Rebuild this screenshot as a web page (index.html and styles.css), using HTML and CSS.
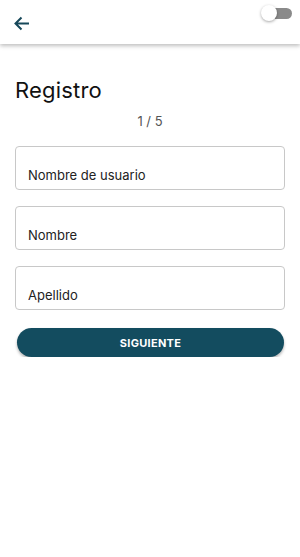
FILE: index.html
```html
<!DOCTYPE html>
<html lang="es">
  <head>
    <meta charset="utf-8" />
    <title>Registro</title>
    <link rel="stylesheet" href="styles.css">
  </head>
  <body>
    <div id="wrap">
      <div id="header">
        <button class="back">
          <svg width="17" height="15" viewBox="0 0 17 15">
            <path d="M16 7.5H2.5M8.5 1.5L2.5 7.5l6 6" fill="none" stroke="#17485a" stroke-width="2" />
          </svg>
        </button>
        <div class="toggle"><span class="thumb"></span></div>
      </div>
      <div id="main">
        <h1 class="title">Registro</h1>
        <p class="step">1 / 5</p>
        <form>
          <label class="field"><input type="text" placeholder="Nombre de usuario" /></label>
          <label class="field"><input type="text" placeholder="Nombre" /></label>
          <label class="field"><input type="text" placeholder="Apellido" /></label>
          <button type="button" class="next">SIGUIENTE</button>
        </form>
      </div>
    </div>
  </body>
</html>
```

FILE: styles.css
```css
* {
  margin: 0;
  padding: 0;
  box-sizing: border-box;
}
body {
  font-family: Inter, "Noto Sans", sans-serif;
  background: #fff;
  color: #111;
}
#header {
  /* top bar */
  height: 44px;
  display: flex;
  align-items: center;
  justify-content: space-between;
  padding: 0 8px 0 13px;
  background: #fff;
  box-shadow: 0 2px 4px rgba(0, 0, 0, 0.25);
}
.back {
  border: 0;
  background: transparent;
  display: flex;
  margin-top: 2px;
}
.toggle {
  /* switch */
  position: relative;
  align-self: flex-start;
  margin-top: 8px;
  width: 30px;
  height: 11px;
  border-radius: 6px;
  background: #8a8a8a;
  margin-left: auto;
}
.thumb {
  position: absolute;
  left: -1px;
  top: -3px;
  width: 16px;
  height: 16px;
  border-radius: 50%;
  background: #fff;
  box-shadow: 0 1px 3px rgba(0, 0, 0, 0.35);
}
#main {
  padding: 31px 15px 0;
}
.title {
  font-size: 22px;
  font-weight: 400;
  line-height: 30px;
  letter-spacing: 0.2px;
}
.step {
  text-align: center;
  font-size: 13px;
  color: #555;
  margin-top: 7px;
  line-height: 18px;
}
form {
  display: flex;
  flex-direction: column;
  margin-top: 16px;
  gap: 16px;
}
.field {
  display: block;
  height: 44px;
  border: 1px solid #c8c8c8;
  border-radius: 4px;
  padding: 17px 12px 0;
}
.field input {
  width: 100%;
  border: 0;
  outline: 0;
  font-family: inherit;
  font-size: 13px;
  line-height: 20px;
  background: transparent;
}
.field input::placeholder {
  color: #222;
}
.next {
  /* siguiente */
  margin: 2px 1px 0 2px;
  height: 29px;
  border: 0;
  border-radius: 15px;
  background: #134c5f;
  color: #fff;
  font-family: inherit;
  font-size: 11px;
  font-weight: 700;
  letter-spacing: 0.3px;
  box-shadow: 0 2px 3px rgba(0, 0, 0, 0.3);
}
```
